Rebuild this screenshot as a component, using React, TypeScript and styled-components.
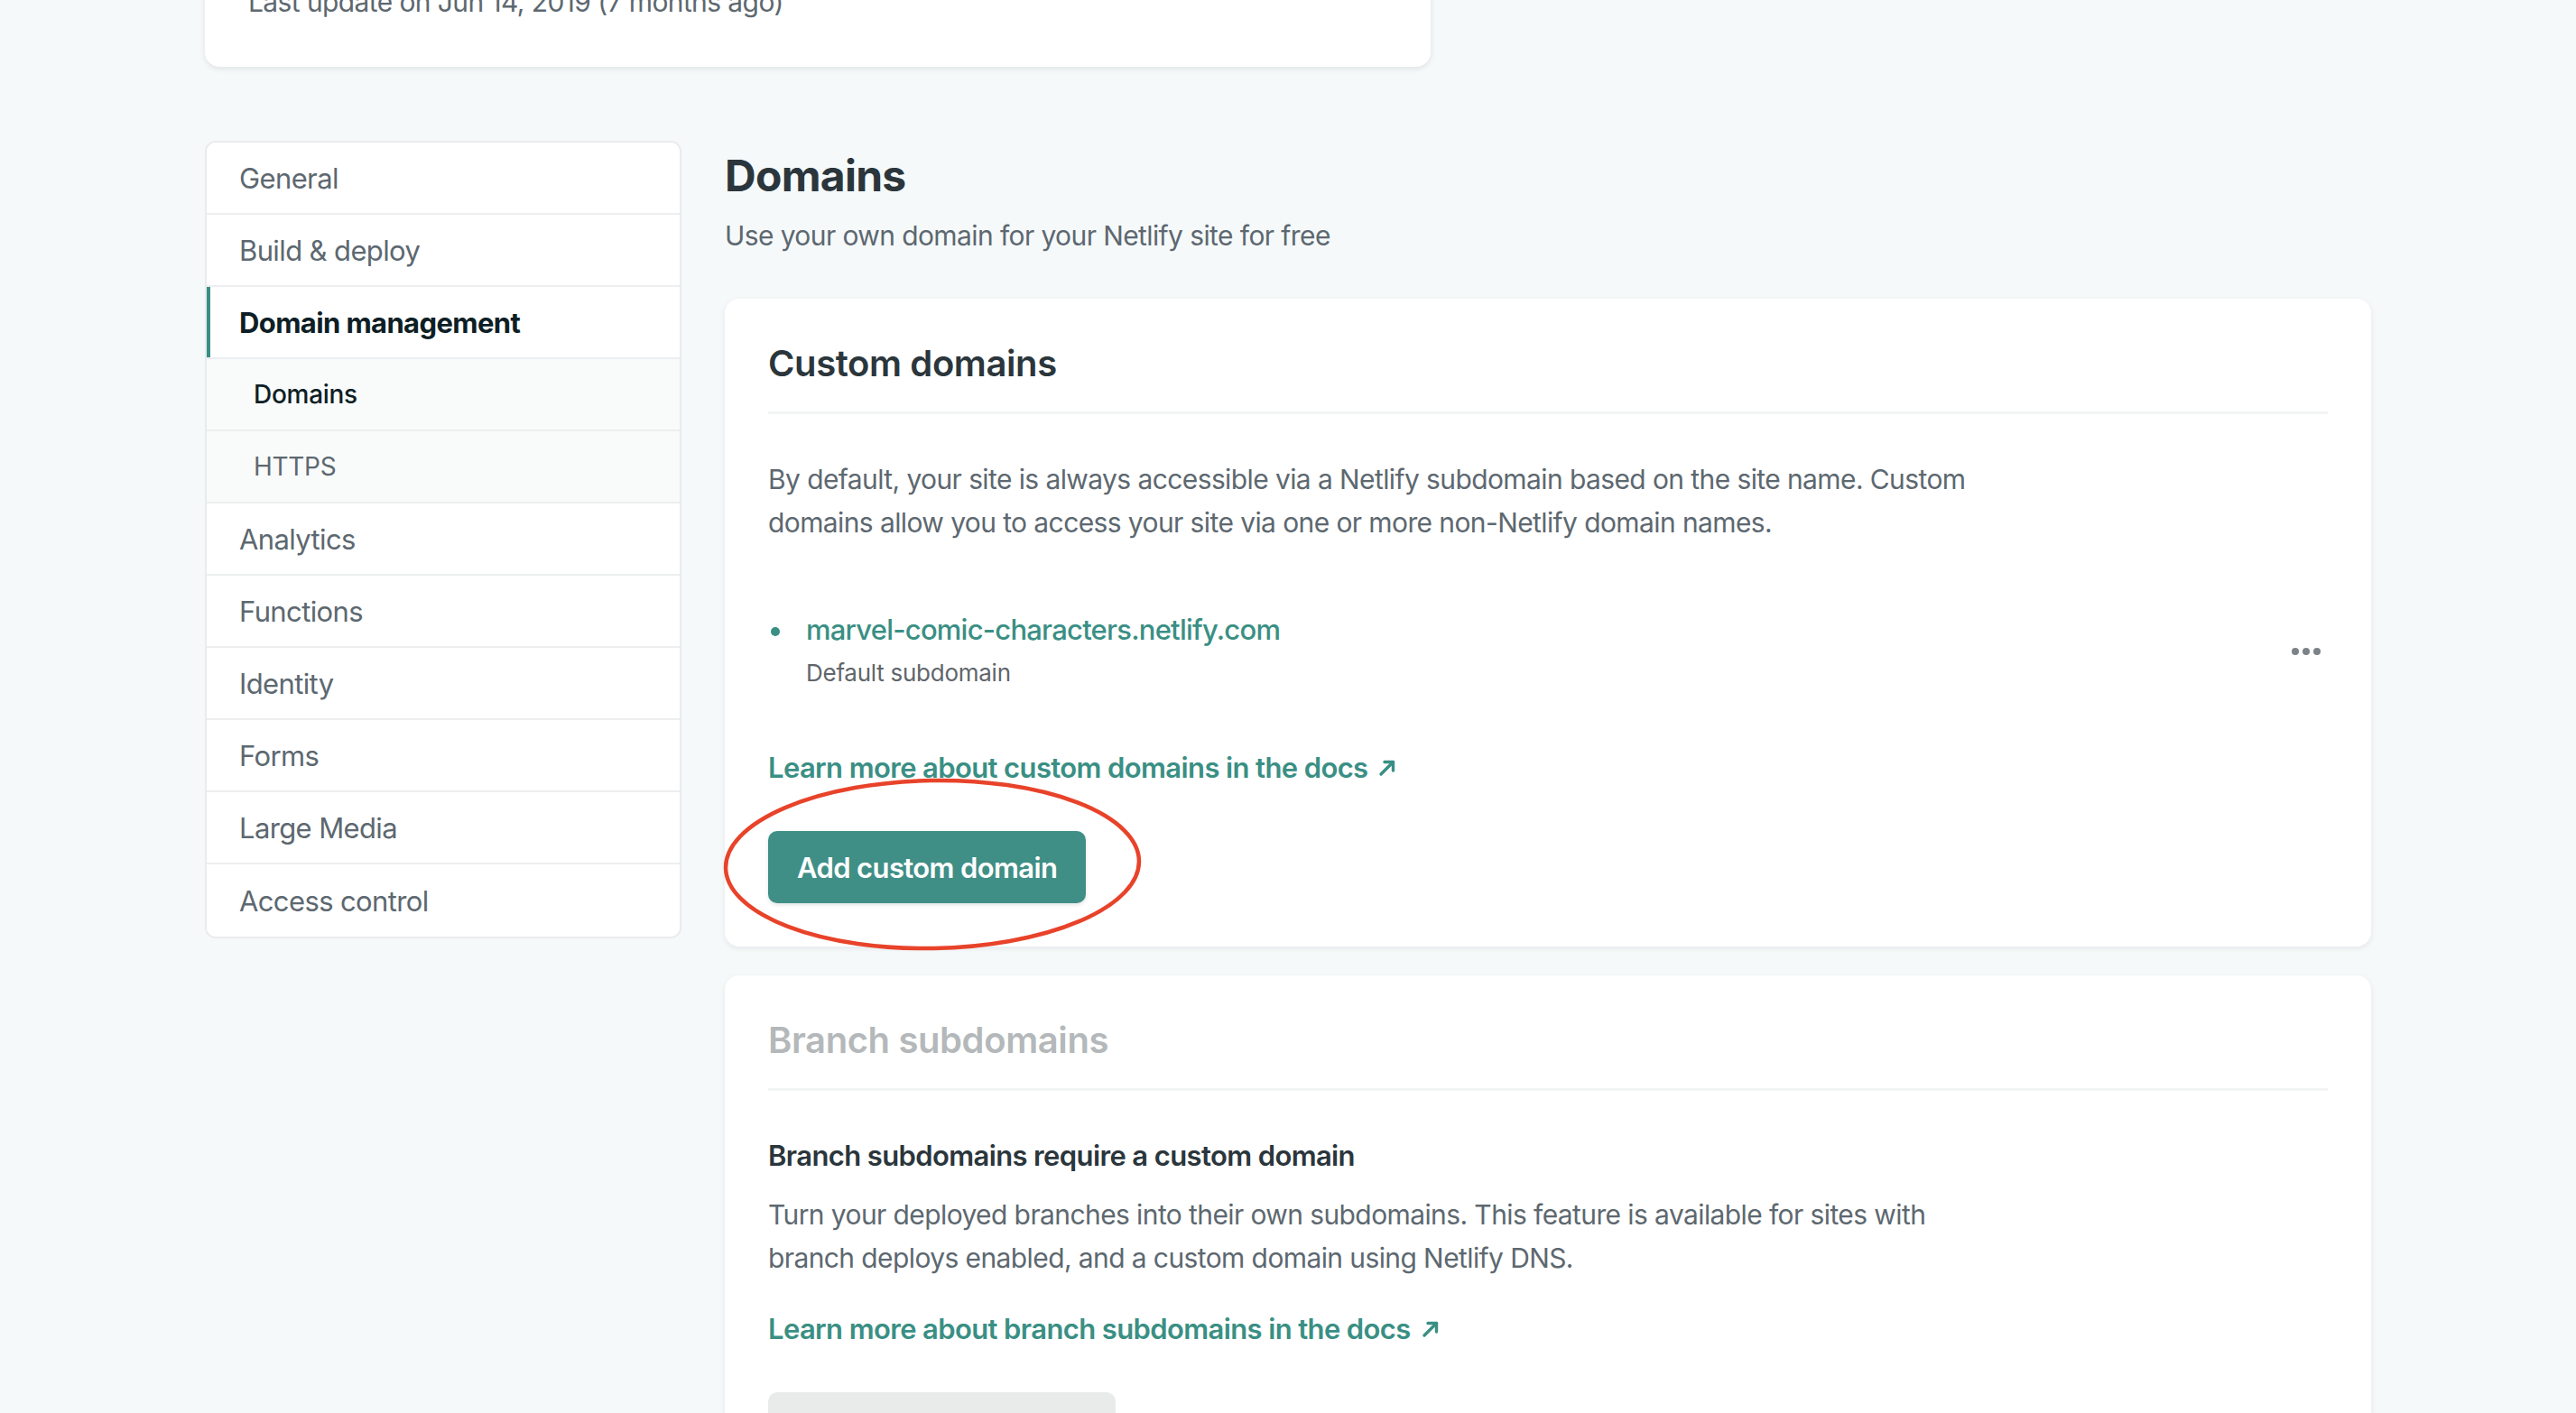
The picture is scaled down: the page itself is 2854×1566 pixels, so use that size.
import React from "react";
import styled, { createGlobalStyle } from "styled-components";

const GlobalStyle = createGlobalStyle`
  html, body {
    margin: 0;
    padding: 0;
    background: #f6f9fa;
    font-family: Inter, "Noto Sans", "Liberation Sans", sans-serif;
    -webkit-font-smoothing: antialiased;
    overflow: hidden;
  }
  * { box-sizing: border-box; }
`;

const teal = "#3a8f84";
const grayText = "#5d6870";
const darkText = "#2b363c";

const Page = styled.div`
  width: 2400px;
  margin: 0 auto;
  padding-bottom: 80px;
`;

const TopCard = styled.section`
  width: 1358px;
  margin-top: -46px;
  padding: 24px 48px 48px;
  background: #fff;
  border-radius: 16px;
  box-shadow: 0 2px 6px rgba(14, 30, 37, 0.1);
`;

const MetaText = styled.p`
  margin: 0;
  font-size: 30px;
  line-height: 48px;
  letter-spacing: -0.02em;
  color: ${grayText};
`;

const Layout = styled.div`
  display: grid;
  grid-template-columns: 528px 1fr;
  column-gap: 48px;
  align-items: start;
  margin-top: 82px;
`;

const SideNav = styled.nav`
  background: #fff;
  border: 2px solid #e9ebec;
  border-radius: 12px;
  overflow: hidden;
`;

const NavItem = styled.a<{ $active?: boolean; $sub?: boolean; $current?: boolean }>`
  display: flex;
  align-items: center;
  height: 80px;
  padding-left: ${(p) => (p.$sub ? "52px" : "36px")};
  border-bottom: 2px solid #eceeef;
  background: ${(p) => (p.$sub ? "#f9fafa" : "#fff")};
  font-size: ${(p) => (p.$sub ? "28px" : "31px")};
  font-weight: ${(p) => (p.$active ? 700 : p.$current ? 500 : 400)};
  color: ${(p) => (p.$active || p.$current ? "#0e1e25" : grayText)};
  box-shadow: ${(p) => (p.$active ? `inset 4px 0 0 ${teal}` : "none")};
  text-decoration: none;
  letter-spacing: ${(p) => (p.$sub ? "-0.01em" : "-0.02em")};
  &:last-child {
    border-bottom: none;
  }
`;

const Content = styled.main`
  display: flex;
  flex-direction: column;
  padding-top: 11px;
`;

const PageTitle = styled.h1`
  margin: 0;
  font-size: 48px;
  line-height: 56px;
  font-weight: 700;
  color: ${darkText};
  letter-spacing: -0.015em;
`;

const PageSubtitle = styled.p`
  margin: 14px 0 46px;
  font-size: 30px;
  line-height: 48px;
  color: ${grayText};
  letter-spacing: -0.02em;
`;

const Card = styled.section`
  background: #fff;
  border-radius: 16px;
  padding: 48px 48px 48px;
  box-shadow: 0 2px 6px rgba(14, 30, 37, 0.08);
  & + & {
    margin-top: 32px;
  }
`;

const CardHeader = styled.header`
  padding-bottom: 29px;
  border-bottom: 3px solid #f2f4f5;
  margin-bottom: 48px;
`;

const CardTitle = styled.h2<{ $disabled?: boolean }>`
  margin: 0;
  font-size: 40px;
  line-height: 48px;
  font-weight: 600;
  color: ${(p) => (p.$disabled ? "#b4b8ba" : darkText)};
  letter-spacing: -0.01em;
`;

const Paragraph = styled.p`
  margin: 0;
  max-width: 1360px;
  font-size: 30px;
  line-height: 48px;
  color: ${grayText};
  letter-spacing: -0.02em;
`;

const SubHeading = styled.h3`
  margin: 0 0 17px;
  font-size: 31px;
  line-height: 48px;
  font-weight: 600;
  color: ${darkText};
  letter-spacing: -0.02em;
`;

const DomainList = styled.ul`
  list-style: none;
  margin: 73px 0 63px;
  padding: 0;
`;

const DomainRow = styled.li`
  display: flex;
  align-items: center;
  justify-content: space-between;
`;

const DomainInfo = styled.div`
  position: relative;
  padding-left: 42px;
  &::before {
    content: "";
    position: absolute;
    left: 3px;
    top: 19px;
    width: 10px;
    height: 10px;
    border-radius: 50%;
    background: ${teal};
  }
`;

const DomainLink = styled.a`
  display: block;
  font-size: 31px;
  line-height: 44px;
  font-weight: 500;
  color: ${teal};
  text-decoration: none;
  letter-spacing: -0.025em;
`;

const DomainNote = styled.div`
  margin-top: 8px;
  font-size: 26px;
  line-height: 36px;
  color: #5f666b;
  letter-spacing: -0.01em;
`;

const MoreButton = styled.button`
  display: flex;
  gap: 4px;
  align-items: center;
  margin-top: 4px;
  padding: 8px;
  background: none;
  border: none;
  cursor: pointer;
`;

const Dot = styled.span`
  width: 8px;
  height: 8px;
  border-radius: 50%;
  background: #7b8388;
`;

const DocsLink = styled.a`
  display: inline-flex;
  align-items: center;
  gap: 12px;
  font-size: 31px;
  line-height: 48px;
  font-weight: 600;
  color: ${teal};
  text-decoration: none;
  letter-spacing: -0.02em;
`;

const LinkRow = styled.div<{ $top?: number }>`
  margin-top: ${(p) => p.$top ?? 0}px;
`;

const ButtonWrap = styled.div`
  position: relative;
  display: inline-block;
  margin-top: 46px;
`;

const PrimaryButton = styled.button<{ $muted?: boolean }>`
  height: 80px;
  min-width: ${(p) => (p.$muted ? "385px" : "0")};
  padding: 0 32px;
  border: none;
  border-radius: 10px;
  background: ${(p) => (p.$muted ? "#e9ebeb" : "#3f8f86")};
  color: ${(p) => (p.$muted ? "#9aa0a3" : "#fff")};
  font-family: inherit;
  font-size: 31px;
  font-weight: 600;
  letter-spacing: -0.02em;
  box-shadow: ${(p) => (p.$muted ? "none" : "0 2px 4px rgba(14, 30, 37, 0.12)")};
  cursor: pointer;
`;

const Annotation = styled.svg`
  position: absolute;
  left: -52px;
  top: -61px;
  width: 468px;
  height: 196px;
  pointer-events: none;
  overflow: visible;
`;

const ExternalArrow = () => (
  <svg width="20" height="20" viewBox="0 0 20 20" fill="none" stroke="currentColor" strokeWidth="3.4" strokeLinecap="round" strokeLinejoin="round">
    <path d="M3 17 L16.5 3.5" />
    <path d="M7 3.5 H16.5 V13" />
  </svg>
);

const navItems: { label: string; active?: boolean; sub?: boolean; current?: boolean }[] = [
  { label: "General" },
  { label: "Build & deploy" },
  { label: "Domain management", active: true },
  { label: "Domains", sub: true, current: true },
  { label: "HTTPS", sub: true },
  { label: "Analytics" },
  { label: "Functions" },
  { label: "Identity" },
  { label: "Forms" },
  { label: "Large Media" },
  { label: "Access control" },
];

export default function App() {
  return (
    <>
      <GlobalStyle />
      <Page>
        <TopCard>
          <MetaText>Last update on Jun 14, 2019 (7 months ago)</MetaText>
        </TopCard>
        <Layout>
          <SideNav>
            {navItems.map((item) => (
              <NavItem key={item.label} href="#" $active={item.active} $sub={item.sub} $current={item.current}>
                {item.label}
              </NavItem>
            ))}
          </SideNav>
          <Content>
            <PageTitle>Domains</PageTitle>
            <PageSubtitle>Use your own domain for your Netlify site for free</PageSubtitle>

            <Card>
              <CardHeader>
                <CardTitle>Custom domains</CardTitle>
              </CardHeader>
              <Paragraph>
                By default, your site is always accessible via a Netlify subdomain based on the site name. Custom
                domains allow you to access your site via one or more non-Netlify domain names.
              </Paragraph>
              <DomainList>
                <DomainRow>
                  <DomainInfo>
                    <DomainLink href="#">marvel-comic-characters.netlify.com</DomainLink>
                    <DomainNote>Default subdomain</DomainNote>
                  </DomainInfo>
                  <MoreButton aria-label="Options">
                    <Dot />
                    <Dot />
                    <Dot />
                  </MoreButton>
                </DomainRow>
              </DomainList>
              <LinkRow>
                <DocsLink href="#">
                  Learn more about custom domains in the docs <ExternalArrow />
                </DocsLink>
              </LinkRow>
              <ButtonWrap>
                <PrimaryButton>Add custom domain</PrimaryButton>
                <Annotation viewBox="0 0 468 196">
                  <ellipse cx="234" cy="98" rx="229" ry="93" fill="none" stroke="#e8432a" strokeWidth="4.5" transform="rotate(-1 234 98)" />
                </Annotation>
              </ButtonWrap>
            </Card>

            <Card>
              <CardHeader>
                <CardTitle $disabled>Branch subdomains</CardTitle>
              </CardHeader>
              <SubHeading>Branch subdomains require a custom domain</SubHeading>
              <Paragraph>
                Turn your deployed branches into their own subdomains. This feature is available for sites with
                branch deploys enabled, and a custom domain using Netlify DNS.
              </Paragraph>
              <LinkRow $top={31}>
                <DocsLink href="#">
                  Learn more about branch subdomains in the docs <ExternalArrow />
                </DocsLink>
              </LinkRow>
              <ButtonWrap>
                <PrimaryButton $muted>Add custom domain</PrimaryButton>
              </ButtonWrap>
            </Card>
          </Content>
        </Layout>
      </Page>
    </>
  );
}
